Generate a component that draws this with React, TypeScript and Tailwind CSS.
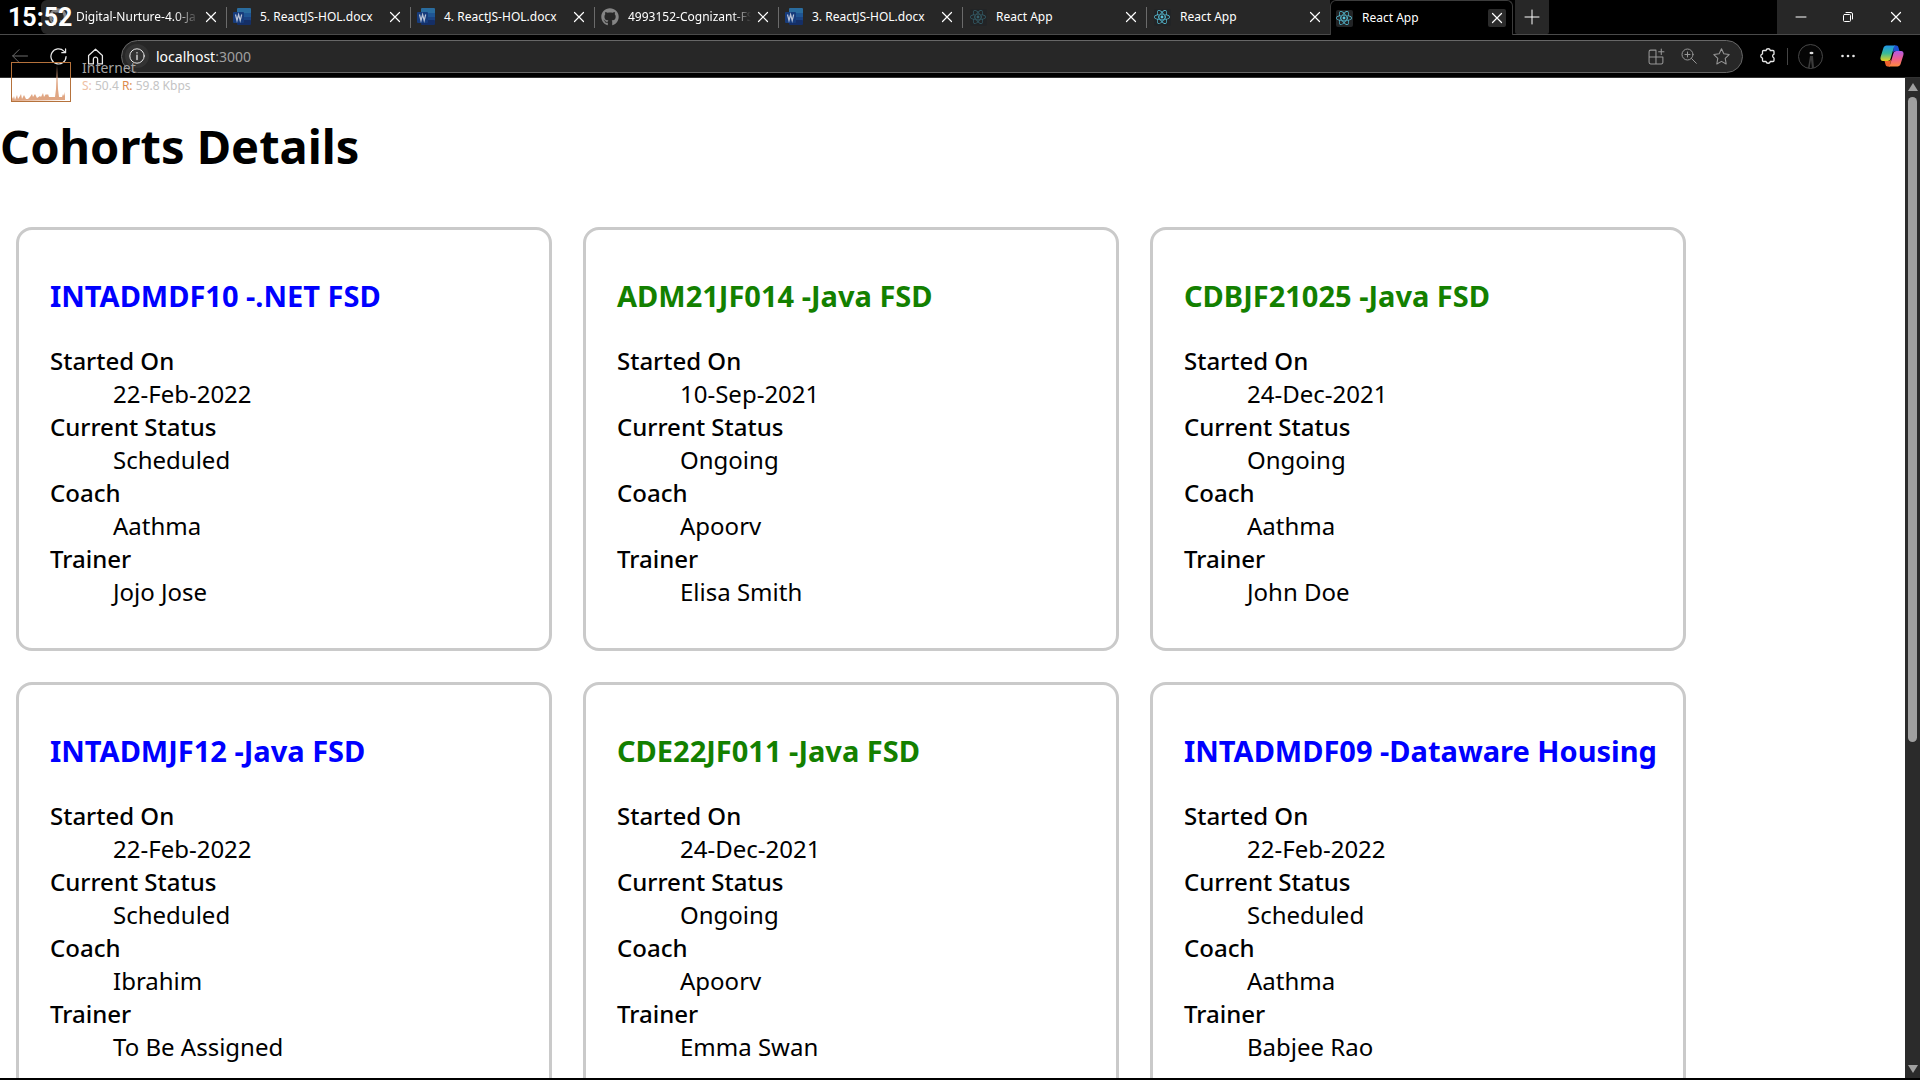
import { ReactNode } from 'react';
import { FaGithub, FaReact } from 'react-icons/fa';

type Kind = 'word' | 'github' | 'react' | 'react-dim';

const tabs: { title: string; kind: Kind; active?: boolean; fade?: boolean }[] = [
  { title: '5. ReactJS-HOL.docx', kind: 'word' },
  { title: '4. ReactJS-HOL.docx', kind: 'word' },
  { title: '4993152-Cognizant-FS', kind: 'github', fade: true },
  { title: '3. ReactJS-HOL.docx', kind: 'word' },
  { title: 'React App', kind: 'react-dim' },
  { title: 'React App', kind: 'react' },
  { title: 'React App', kind: 'react', active: true },
];

const cohorts = [
  { code: 'INTADMDF10', tech: '.NET FSD', started: '22-Feb-2022', status: 'Scheduled', coach: 'Aathma', trainer: 'Jojo Jose' },
  { code: 'ADM21JF014', tech: 'Java FSD', started: '10-Sep-2021', status: 'Ongoing', coach: 'Apoorv', trainer: 'Elisa Smith' },
  { code: 'CDBJF21025', tech: 'Java FSD', started: '24-Dec-2021', status: 'Ongoing', coach: 'Aathma', trainer: 'John Doe' },
  { code: 'INTADMJF12', tech: 'Java FSD', started: '22-Feb-2022', status: 'Scheduled', coach: 'Ibrahim', trainer: 'To Be Assigned' },
  { code: 'CDE22JF011', tech: 'Java FSD', started: '24-Dec-2021', status: 'Ongoing', coach: 'Apoorv', trainer: 'Emma Swan' },
  { code: 'INTADMDF09', tech: 'Dataware Housing', started: '22-Feb-2022', status: 'Scheduled', coach: 'Aathma', trainer: 'Babjee Rao' },
];

function Line({ children, className, box = 16 }: { children: ReactNode; className: string; box?: number }) {
  return (
    <svg viewBox={`0 0 ${box} ${box}`} fill="none" stroke="currentColor" strokeLinecap="round" strokeLinejoin="round" className={className} aria-hidden="true">
      {children}
    </svg>
  );
}

function Cross() {
  return (
    <Line className="size-4">
      <path d="M3.5 3.5l9 9M12.5 3.5l-9 9" strokeWidth="1.2" />
    </Line>
  );
}

function Favicon({ kind }: { kind: Kind }) {
  if (kind === 'word')
    return (
      <svg viewBox="0 0 18 18" className="size-[18px]" aria-hidden="true">
        <rect x="4" y="0" width="14" height="6" rx="1" fill="#2a6c9e" />
        <rect x="4" y="5" width="14" height="5" fill="#1f5694" />
        <rect x="4" y="9" width="14" height="4" fill="#1a4383" />
        <rect x="4" y="12" width="14" height="5" rx="1" fill="#152f66" />
        <rect x="0" y="4" width="11" height="11" rx="1" fill="#173c7c" />
        <path d="M2.5 6.5l1.5 6 1.6-6 1.6 6 1.5-6" fill="none" stroke="#b9c3d6" strokeWidth="1.2" />
      </svg>
    );
  if (kind === 'github') return <FaGithub className="size-[18px] text-[#858585]" />;
  return (
    <span className="flex size-[17px] items-center justify-center rounded-xs bg-[#222426]">
      <FaReact className={kind === 'react' ? 'size-4 text-[#58c4dc]' : 'size-4 text-[#35606c]'} />
    </span>
  );
}

function TabStrip() {
  return (
    <div className="flex h-[35px] shrink-0 border-b border-[#4a4a4a] bg-black text-[12px] text-white">
      <div className="ml-[41px] flex w-[185px] items-center rounded-l-md bg-[#272727] pl-2">
        <Favicon kind="github" />
        <button className="ml-[9px] w-[123px] text-left whitespace-nowrap [mask-image:linear-gradient(to_right,black_80%,transparent)]">Digital-Nurture-4.0-Ja</button>
        <button aria-label="Close tab" className="ml-1"><Cross /></button>
      </div>
      {tabs.map((t, i) => (
        <div
          key={i}
          className={
            t.active
              ? '-mb-px flex w-[183px] items-center rounded-t-md border border-b-0 border-[#3c3c3c] bg-black pl-1'
              : 'flex w-[184px] items-center bg-[#272727]'
          }
        >
          {!t.active && <span className="mr-[6px] h-[21px] w-px bg-[#6b6b6b]" />}
          <span className="flex w-[18px] justify-center"><Favicon kind={t.kind} /></span>
          <button
            className={
              t.fade
                ? 'ml-[9px] w-[123px] text-left whitespace-nowrap [mask-image:linear-gradient(to_right,black_85%,transparent)]'
                : 'ml-[9px] w-[123px] text-left whitespace-nowrap'
            }
          >
            {t.title}
          </button>
          <button aria-label="Close tab" className={t.active ? 'ml-[3px] flex size-[18px] items-center justify-center rounded-xs bg-[#2b2b2b]' : 'ml-[3px] flex size-[18px] items-center justify-center'}>
            <Cross />
          </button>
        </div>
      ))}
      <button aria-label="New tab" className="ml-[2px] flex w-[34px] items-center justify-center rounded-b-xs bg-[#272727]">
        <Line className="size-4"><path d="M8 1v14M1 8h14" /></Line>
      </button>
      <div className="ml-auto flex w-[143px] items-center justify-around bg-[#272727]">
        <button aria-label="Minimize"><Line className="size-4"><path d="M3 8h10" /></Line></button>
        <button aria-label="Restore">
          <Line className="size-4">
            <rect x="3.5" y="5.5" width="7" height="7" rx="1" />
            <path d="M6 3.5h5a1.5 1.5 0 0 1 1.5 1.5v5" />
          </Line>
        </button>
        <button aria-label="Close"><Cross /></button>
      </div>
    </div>
  );
}

function Toolbar() {
  return (
    <div className="flex h-[43px] shrink-0 items-center border-b border-[#333] bg-black text-[#e8e8e8]">
      <button aria-label="Back" className="ml-3 text-[#6c6c6c]">
        <Line className="size-4"><path d="M15.500 8H.7M7 1.700L.7 8 7 14.300" /></Line>
      </button>
      <button aria-label="Refresh" className="ml-[22px]">
        <Line className="size-[17px]" box={18}><path d="M17 9a8 8 0 1 1-2.300-5.700L16.500 5M16.500 1v4h-4" strokeWidth="1.300" /></Line>
      </button>
      <button aria-label="Home" className="ml-5">
        <Line className="size-[17px]"><path d="M1.500 7L8 1.200 14.500 7v8H10v-4.500a2 2 0 0 0-4 0V15H1.500z" strokeWidth="1.200" /></Line>
      </button>
      <div className="ml-[17px] flex h-[33px] grow items-center rounded-full border border-[#676767] bg-[#272727] pr-3">
        <button aria-label="Site information" className="ml-[3px] flex size-6 items-center justify-center rounded-full bg-[#333]">
          <Line className="size-4">
            <circle cx="8" cy="8" r="7.200" />
            <path d="M8 7.200v4.300M8 4.700v.2" strokeWidth="1.300" />
          </Line>
        </button>
        <div className="relative ml-[7px] grow text-[14px]">
          <input aria-label="Address" defaultValue="localhost:3000" className="w-full bg-transparent text-transparent outline-none" />
          <span className="pointer-events-none absolute inset-0 text-white">localhost<span className="text-[#a0a0a0]">:3000</span></span>
        </div>
        <div className="flex items-center gap-4 text-[#969696]">
          <button aria-label="Apps">
            <Line className="size-[17px]"><path d="M7.500 2H2.500A1.500 1.500 0 0 0 1 3.500v10A1.500 1.500 0 0 0 2.500 15h10a1.500 1.500 0 0 0 1.500-1.500V8.500H1M7.500 2v13M12.500 1v5M10 3.500h5" /></Line>
          </button>
          <button aria-label="Zoom">
            <Line className="size-4"><circle cx="6.500" cy="6.500" r="5.500" /><path d="M10.500 10.500l4.800 4.800M6.500 4v5M4 6.500h5" /></Line>
          </button>
          <button aria-label="Favorite">
            <Line className="size-[17px]"><path d="M8 .8l2.200 4.700 5 .7-3.700 3.600.9 5.200L8 12.600 3.600 15l.9-5.200L.8 6.200l5-.7z" /></Line>
          </button>
        </div>
      </div>
      <button aria-label="Extensions" className="ml-4">
        <Line className="size-[18px]" box={18}>
          <path d="M7 3.500a2.200 2.200 0 0 1 4.300 0H14a1 1 0 0 1 1 1V7.200a2 2 0 0 0 0 3.800V13.500a1 1 0 0 1-1 1h-2.700a2.200 2.200 0 0 1-4.300 0H4.500a1 1 0 0 1-1-1v-2.300a2.200 2.200 0 0 1 0-4.300V4.500a1 1 0 0 1 1-1z" strokeWidth="1.300" />
        </Line>
      </button>
      <span className="ml-[10px] h-[17px] w-px bg-[#444]" />
      <button aria-label="Profile" className="ml-[10px]">
        <svg viewBox="0 0 25 25" className="size-[25px]" aria-hidden="true">
          <circle cx="12.500" cy="12.500" r="12" fill="#050505" stroke="#484848" />
          <ellipse cx="13.500" cy="9" rx="2" ry="1.300" fill="#ddd" />
          <path d="M12 12h3l1 12h-2l-1-8-1.500 8h-1.500z" fill="#3c3c3c" />
        </svg>
      </button>
      <button aria-label="More" className="ml-[17px]">
        <svg viewBox="0 0 16 16" className="size-4" fill="currentColor" aria-hidden="true">
          <circle cx="2.500" cy="8" r="1.300" /><circle cx="8" cy="8" r="1.300" /><circle cx="13.500" cy="8" r="1.300" />
        </svg>
      </button>
      <button aria-label="Copilot" className="mr-4 ml-6">
        <svg viewBox="0 0 24 24" className="size-6" aria-hidden="true">
          <defs>
            <linearGradient id="cpA" x1="0" y1="0" x2="0" y2="1">
              <stop offset="0" stopColor="#2196e8" /><stop offset=".5" stopColor="#36b99a" /><stop offset="1" stopColor="#e8d21e" />
            </linearGradient>
            <linearGradient id="cpB" x1="0" y1="0" x2="0" y2="1">
              <stop offset="0" stopColor="#b05be8" /><stop offset=".5" stopColor="#ee5d90" /><stop offset="1" stopColor="#ff8a3c" />
            </linearGradient>
          </defs>
          <path d="M14 1.500h2.500c1 0 1.600.8 1.900 1.700L19.500 7h-4c-1.500 0-2.300.8-2.700 2z" fill="#1c4fd0" />
          <path d="M6.500 1.500H16c-1.200 0-1.800.9-2.200 2.200l-3.200 10.800C10 16.300 9 17 7.500 17H3C.8 17 0 15 .6 13L3.400 4c.5-1.600 1.600-2.500 3.100-2.500z" fill="url(#cpA)" />
          <path d="M10 22.500H7.500c-1 0-1.600-.8-1.900-1.700L4.500 17h4c1.500 0 2.300-.8 2.700-2z" fill="#f0622c" />
          <path d="M17.500 22.500H8c1.200 0 1.800-.9 2.200-2.200l3.200-10.800C14 7.700 15 7 16.500 7H21c2.200 0 3 2 2.400 4l-2.800 9c-.5 1.600-1.600 2.500-3.100 2.500z" fill="url(#cpB)" />
        </svg>
      </button>
    </div>
  );
}

function NetworkWidget() {
  return (
    <div className="pointer-events-none absolute top-[58px] left-[11px] flex gap-[11px]">
      <svg viewBox="0 0 60 40" className="mt-1 h-10 w-[60px]" aria-hidden="true">
        <rect x=".5" y=".5" width="59" height="39" fill="none" stroke="#b5723c" />
        <path d="M1 39v-4l1 2 1-3 1 4 2-5 1 4 2-3 1-2 1 5 2-4 2 4 2 0 2-2 2-3 1 3 2-3 2 4 3-2 1 1 2-4 1 4 2-3 1 1 1-1 1 3 6 0 1-8 1-24 1 24 1 8 3 0 1-3 1 2 1-4v8z" fill="#e0a683" />
      </svg>
      <div>
        <div className="text-[14px] leading-5 text-[#a5a5a5]">Internet</div>
        <div className="text-[12px] leading-4 text-[#c4c4c4]">
          <span className="text-[#eebfa4]">S:</span> 50.4 <span className="text-[#dd8a4c]">R:</span> 59.8 Kbps
        </div>
      </div>
    </div>
  );
}

function Row({ label, value }: { label: string; value: string }) {
  return (
    <>
      <dt className="font-medium">{label}</dt>
      <dd className="ml-[63px]">{value}</dd>
    </>
  );
}

export default function App() {
  return (
    <div className="relative flex h-screen flex-col overflow-hidden border-b-2 border-black bg-white font-['Noto_Sans',sans-serif] text-black">
      <TabStrip />
      <Toolbar />
      <div className="flex min-h-0 grow">
        <main className="min-w-0 grow overflow-hidden">
          <h1 className="mt-[35px] text-[47px] leading-[66px] font-bold">Cohorts Details</h1>
          <div className="mt-12 flex flex-wrap gap-[31px] px-4">
            {cohorts.map((c) => (
              <section key={c.code} className="w-[536px] rounded-[16px] border-3 border-[#cacaca] px-[31px] pt-[46px] pb-10">
                <h3 className={c.status === 'Ongoing' ? 'text-[29px] leading-10 font-bold whitespace-nowrap text-[#138000]' : 'text-[29px] leading-10 font-bold whitespace-nowrap text-[#0000ff]'}>
                  {c.code} -{c.tech}
                </h3>
                <dl className="mt-7 text-[24px] leading-[33px]">
                  <Row label="Started On" value={c.started} />
                  <Row label="Current Status" value={c.status} />
                  <Row label="Coach" value={c.coach} />
                  <Row label="Trainer" value={c.trainer} />
                </dl>
              </section>
            ))}
          </div>
        </main>
        <div className="flex w-[15px] shrink-0 flex-col items-center bg-[#2b2b2b] py-[5px]">
          <svg viewBox="0 0 10 8" className="h-2 w-[10px]" aria-hidden="true"><path d="M5 0l5 8H0z" fill="#a0a0a0" /></svg>
          <div className="mt-[6px] grow self-stretch px-[3px]"><div className="h-2/3 rounded-full bg-[#a0a0a0]" /></div>
          <svg viewBox="0 0 10 8" className="h-2 w-[10px]" aria-hidden="true"><path d="M0 0h10L5 8z" fill="#a0a0a0" /></svg>
        </div>
      </div>
      <div className="pointer-events-none absolute top-0 left-2 font-['Roboto',sans-serif] text-[25px] leading-9 font-bold text-white">15:52</div>
      <NetworkWidget />
    </div>
  );
}
